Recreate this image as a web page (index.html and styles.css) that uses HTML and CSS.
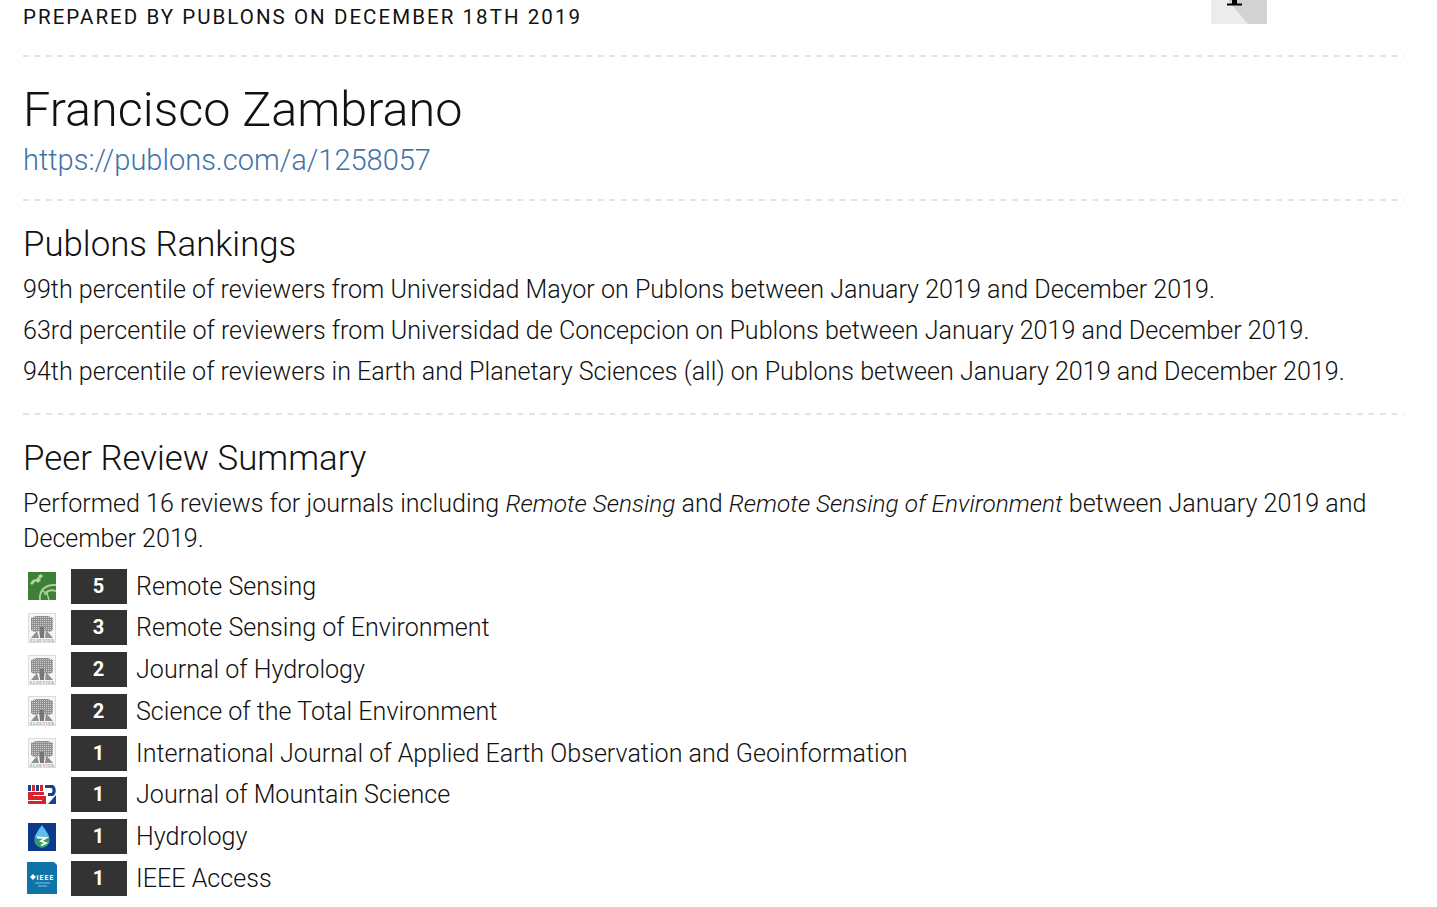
FILE: index.html
```html
<!DOCTYPE html>
<html lang="en">
<head>
<meta charset="utf-8">
<title>Francisco Zambrano - Publons</title>
<link rel="stylesheet" href="styles.css">
</head>
<body>
<svg class="defs" width="0" height="0" aria-hidden="true">
  <defs>
    <pattern id="leaf" width="2" height="2" patternUnits="userSpaceOnUse">
      <rect width="2" height="2" fill="#909090"/>
      <rect width="1" height="1" fill="#cfcfcf"/>
    </pattern>
  </defs>
  <symbol id="elsevier" viewBox="0 0 28 30">
    <rect x="0.5" y="0.5" width="27" height="29" fill="#f6f6f6" stroke="#dcdcdc"/>
    <path d="M3 5l5-2h12l5 2v12l-3 2-5-1-1 6h-4l-1-6-5 1-3-2z" fill="url(#leaf)"/>
    <path d="M3 25l6-7 2 7zM25 25l-7-8-1 8z" fill="#8f8f8f"/>
    <path d="M12 14h4v11h-4z" fill="#777"/>
    <text x="14" y="28.6" class="els-text" text-anchor="middle" textLength="24">ELSEVIER</text>
  </symbol>
</svg>
<main class="report">
  <header class="top">
    <p class="prepared">PREPARED BY PUBLONS ON DECEMBER 18TH 2019</p>
    <div class="corner" aria-hidden="true">
      <svg width="56" height="24" viewBox="0 0 56 24">
        <rect width="56" height="24" fill="#ececec"/>
        <path d="M17 0h39v24h-19z" fill="#d2d2d2"/>
        <path d="M21 0h5v3.5h5v2h-15v-2h5z" fill="#000"/>
      </svg>
    </div>
  </header>
  <section class="block identity">
    <h1 class="name">Francisco Zambrano</h1>
    <a class="link" href="#">https://publons.com/a/1258057</a>
  </section>
  <section class="block rankings">
    <h2 class="heading">Publons Rankings</h2>
    <p class="rank">99th percentile of reviewers from Universidad Mayor on Publons between January 2019 and December 2019.</p>
    <p class="rank">63rd percentile of reviewers from Universidad de Concepcion on Publons between January 2019 and December 2019.</p>
    <p class="rank">94th percentile of reviewers in Earth and Planetary Sciences (all) on Publons between January 2019 and December 2019.</p>
  </section>
  <section class="block summary">
    <h2 class="heading">Peer Review Summary</h2>
    <p class="intro">Performed 16 reviews for journals including <em>Remote Sensing</em> and <em>Remote Sensing of Environment</em> between January 2019 and December 2019.</p>
    <ul class="journals">
      <li class="journal">
        <svg class="logo" viewBox="0 0 28 28"><rect width="28" height="28" fill="#3d8137"/><path d="M2 11l4-4 2 2-4 4zM10 4l3-2 2 2-3 3zM7 8l3-3 3 3-3 3z" fill="#b5d8ac"/><path d="M12 28c-1-9 5-16 16-15M28 19c-5-2-10 0-11 4" stroke="#a9d19f" stroke-width="2" fill="none"/><path d="M14 19l5 2 2 7" stroke="#a9d19f" stroke-width="1.400" fill="none"/></svg>
        <span class="count">5</span><span class="title">Remote Sensing</span>
      </li>
      <li class="journal">
        <svg class="logo"><use href="#elsevier"/></svg>
        <span class="count">3</span><span class="title">Remote Sensing of Environment</span>
      </li>
      <li class="journal">
        <svg class="logo"><use href="#elsevier"/></svg>
        <span class="count">2</span><span class="title">Journal of Hydrology</span>
      </li>
      <li class="journal">
        <svg class="logo"><use href="#elsevier"/></svg>
        <span class="count">2</span><span class="title">Science of the Total Environment</span>
      </li>
      <li class="journal">
        <svg class="logo"><use href="#elsevier"/></svg>
        <span class="count">1</span><span class="title">International Journal of Applied Earth Observation and Geoinformation</span>
      </li>
      <li class="journal">
        <svg class="logo" viewBox="0 0 28 28"><path d="M0 4h3v6h-3zM8 4h3v6h-3z" fill="#1b3f91"/><path d="M4 4h3v6h-3zM12 4h3v6h-3z" fill="#d8232a"/><path d="M0 11h16v3h-11v1h13v8h-18v-3h14v-1h-14z" fill="#d8232a"/><path fill-rule="evenodd" d="M17 4h7c5 0 5 11 0 11h-4v-3h3c2 0 2-5 0-5h-6z" fill="#1b3f91"/><path d="M20 23l8-9v9z" fill="#1b3f91"/></svg>
        <span class="count">1</span><span class="title">Journal of Mountain Science</span>
      </li>
      <li class="journal">
        <svg class="logo" viewBox="0 0 28 28"><rect width="28" height="28" fill="#0b3a8c"/><path d="M14 2c3 5 7.500 9 7.500 15a7.500 7.500 0 0 1-15 0c0-6 4.500-10 7.500-15z" fill="#5fbde6"/><path d="M7 15c4-1 10-1 14 0 .5 5-2 9.500-7 9.500s-7.500-4.500-7-9.500z" fill="#2f9d63"/><path d="M9 14.500l9 .5-5 3 5 2-5 2.500" stroke="#fff" stroke-width="1.800" fill="none"/></svg>
        <span class="count">1</span><span class="title">Hydrology</span>
      </li>
      <li class="journal">
        <svg class="logo logo-wide" viewBox="0 0 30 32"><path d="M0 0h27l3 3v29h-30z" fill="#0f73a8"/><path d="M3 15l3-3 3 3-3 3z" fill="#fff"/><text x="9.500" y="18" class="ieee-text" textLength="17">IEEE</text><path d="M8 21h15M11 24h9" stroke="#8cc2dc" stroke-width="1"/></svg>
        <span class="count">1</span><span class="title">IEEE Access</span>
      </li>
    </ul>
  </section>
</main>
</body>
</html>
```
FILE: styles.css
```css
* { box-sizing: border-box; }
html, body { margin: 0; padding: 0; background: #fff; }
body {
  height: 907px;
  overflow: hidden;
  font-family: Roboto, "Liberation Sans", sans-serif;
  font-weight: 300;
  color: #111;
}
.defs { position: absolute; }
.report { width: 1381px; margin-left: 23px; }
.top {
  display: flex;
  justify-content: space-between;
  align-items: flex-start;
  height: 55px;
}
.prepared {
  margin: 5px 0 0;
  font-size: 20.5px;
  line-height: 24px;
  font-weight: 400;
  letter-spacing: 2.05px;
  white-space: nowrap;
  color: #111;
}
.corner { width: 56px; height: 24px; margin-right: 137px; }
.corner svg { display: block; }
.block {
  background-image: linear-gradient(90deg, #e2e2e2 0 6px, transparent 6px);
  background-size: 11.5px 2px;
  background-repeat: repeat-x;
  background-position: 0 0;
}
.identity { height: 144px; padding-top: 26px; }
.name {
  margin: 0;
  font-size: 48.5px;
  line-height: 58px;
  font-weight: 300;
  color: #111;
}
.link {
  display: block;
  margin-top: 2px;
  font-size: 29px;
  line-height: 38px;
  color: #3f72a8;
  text-decoration: none;
}
.rankings { height: 214px; padding-top: 23px; }
.heading {
  margin: 0;
  font-size: 34.8px;
  line-height: 44px;
  font-weight: 300;
  color: #111;
}
.rank {
  margin: 0;
  font-size: 25.1px;
  line-height: 41px;
}
.rankings .heading { margin-bottom: 3px; }
.summary { padding-top: 22.5px; }
.summary .heading { margin-bottom: 6px; }
.intro {
  margin: 0 0 13px;
  font-size: 25.1px;
  line-height: 35px;
}
.intro em { font-size: 24.4px; }
.journals { margin: 0; padding: 0; list-style: none; }
.journal {
  display: flex;
  align-items: center;
  height: 35px;
  margin-bottom: 6.75px;
}
.logo { width: 28px; height: 30px; margin: 0 15px 0 5px; flex: none; }
.logo-wide { width: 30px; height: 32px; margin: 0 14px 0 4px; }
.count {
  width: 56px;
  height: 35px;
  flex: none;
  padding-right: 1px;
  background: #333;
  color: #fff;
  font-size: 20px;
  font-weight: 700;
  line-height: 35px;
  text-align: center;
}
.title { margin-left: 9px; font-size: 25.1px; line-height: 35px; }
.els-text { font-family: "Liberation Serif", serif; font-size: 4px; font-weight: 400; fill: #666; }
.ieee-text { font-family: Roboto, sans-serif; font-size: 7px; font-weight: 700; fill: #fff; }
```
